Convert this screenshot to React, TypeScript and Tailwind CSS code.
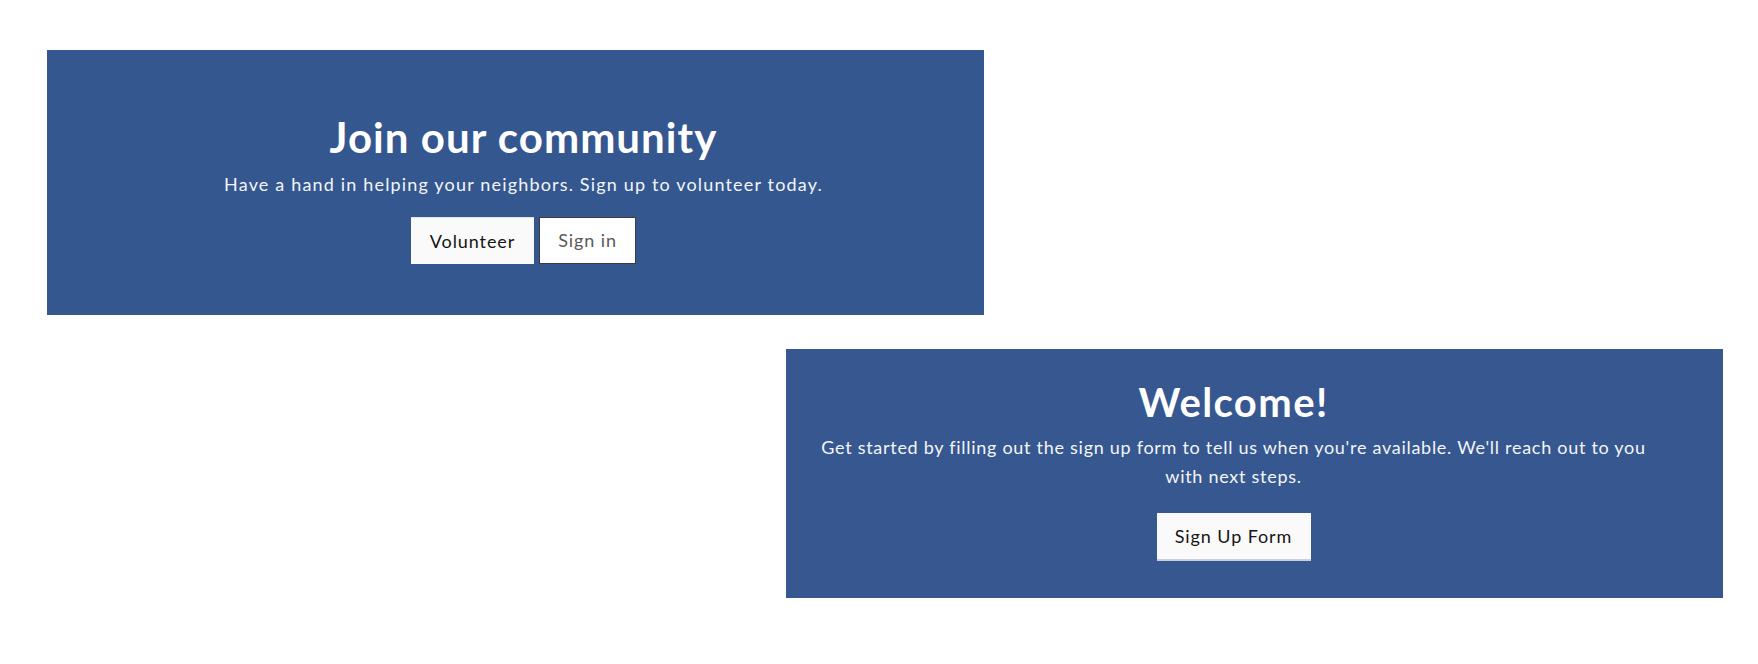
export default function App() {
  return (
    <div
      className="flex min-h-screen w-full flex-col bg-white pt-[50px]"
      style={{ fontFamily: 'Lato, "Open Sans", sans-serif' }}
    >
      {/* Join banner */}
      <section className="ml-[47px] flex w-[937px] flex-col items-center self-start bg-[#35578f] pb-[51px] pl-[40px] pr-[24px] pt-[61px] text-center text-white">
        <h1 className="text-[42px] font-bold leading-[52px] tracking-[0.025em]">Join our community</h1>
        <p className="mt-[7px] text-[18px] leading-[28px] tracking-[0.065em] text-[#f3f5f9]">
          Have a hand in helping your neighbors. Sign up to volunteer today.
        </p>
        <div className="mt-[19px] flex gap-[5px]">
          <button className="h-[47px] w-[123px] border-t border-[#dfe3ea] bg-[#fafafa] text-[18px] tracking-[0.05em] text-[#151515]">
            Volunteer
          </button>
          <button className="h-[47px] w-[97px] border-[1.5px] border-[#3b3b3b] bg-white text-[18px] tracking-[0.05em] text-[#5a5a5a]">
            Sign in
          </button>
        </div>
      </section>

      {/* Welcome banner */}
      <section className="mr-[35px] mt-[34px] flex w-[937px] flex-col items-center self-end bg-[#36578f] pb-[37px] pl-[20px] pr-[62px] pt-[28px] text-center text-white">
        <h2 className="text-[40px] font-bold leading-[50px] tracking-[0.035em]">Welcome!</h2>
        <p className="mt-[6px] max-w-[850px] text-[18px] leading-[29px] tracking-[0.04em] text-[#f3f5f9]">
          Get started by filling out the sign up form to tell us when you're available. We'll reach out to you with next steps.
        </p>
        <button className="mt-[22px] h-[48px] w-[154px] border-b-2 border-[#c9cfdb] bg-[#fafafa] text-[18px] tracking-[0.05em] text-[#151515]">
          Sign Up Form
        </button>
      </section>
    </div>
  );
}
